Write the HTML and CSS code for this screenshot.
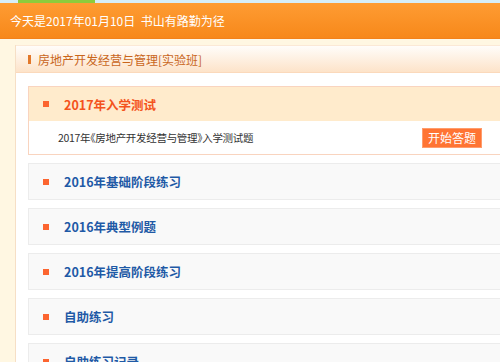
FILE: index.html
```html
<!DOCTYPE html>
<html lang="zh-CN">
<head>
  <meta charset="UTF-8">
  <meta name="viewport" content="width=device-width, initial-scale=1.0">
  <title>在线练习</title>
  <link rel="stylesheet" href="styles.css">
</head>
<body>
  <div class="topbar"></div>
  <header class="header">今天是2017年01月10日&nbsp; 书山有路勤为径</header>

  <div class="main">
    <div class="panel">
      <div class="panel-title"><span class="bar"></span>房地产开发经营与管理[实验班]</div>
      <div class="panel-body">
        <div class="item active">
          <div class="item-head"><span class="dot"></span>2017年入学测试</div>
          <div class="item-row">
            <span class="paper">2017年《房地产开发经营与管理》入学测试题</span>
            <button class="start">开始答题</button>
          </div>
        </div>
        <div class="item">
          <div class="item-head"><span class="dot"></span>2016年基础阶段练习</div>
        </div>
        <div class="item">
          <div class="item-head"><span class="dot"></span>2016年典型例题</div>
        </div>
        <div class="item">
          <div class="item-head"><span class="dot"></span>2016年提高阶段练习</div>
        </div>
        <div class="item">
          <div class="item-head"><span class="dot"></span>自助练习</div>
        </div>
        <div class="item">
          <div class="item-head"><span class="dot"></span>自助练习记录</div>
        </div>
      </div>
    </div>
  </div>
</body>
</html>
```

FILE: styles.css
```css
* {
  box-sizing: border-box;
}
body {
  margin: 0;
  font-family: "Noto Sans CJK SC", "Liberation Sans", sans-serif;
  font-size: 12px;
  color: #333;
  background: #fff7e2;
  overflow: hidden;
}
.topbar {
  height: 3px;
  background: linear-gradient(90deg, #d6eef8 0 18px, #8ccc3c 18px 95px, #d6eef8 95px);
}
.header {
  height: 36px;
  line-height: 36px;
  padding-left: 10px;
  color: #fff;
  font-size: 12px;
  background: linear-gradient(#fe9c33, #f7881a);
  border-bottom: 1px solid #f3811a;
}
.main {
  width: 530px;
  padding: 6px 0 0 15px;
}
.panel {
  background: #fff;
  border-left: 1px solid #f6dfc6;
  min-height: 330px;
}
.panel-title {
  height: 28px;
  display: flex;
  align-items: center;
  padding-left: 12px;
  font-size: 12px;
  color: #c9661c;
  background: linear-gradient(#fffdfa, #fde3c9);
  border-bottom: 1px solid #fbd9bb;
  border-top: 1px solid #fbe9d6;
}
.bar {
  width: 3px;
  height: 9px;
  background: #e2782a;
  margin-right: 7px;
}
.panel-body {
  padding: 13px 13px 0 12px;
}
.item {
  border: 1px solid #ececec;
  background: #f9f9f9;
  margin-bottom: 8px;
}
.item-head {
  height: 35px;
  display: flex;
  align-items: center;
  padding-left: 14px;
  font-size: 12.5px;
  font-weight: bold;
  color: #1f5aa6;
}
.dot {
  width: 6px;
  height: 6px;
  background: #fc6530;
  margin-right: 15px;
}
.item.active {
  border-color: #f9d4bf;
  background: #fff;
}
.item.active .item-head {
  height: 34px;
  background: #ffebcc;
  color: #f4531c;
}
.item-row {
  height: 33px;
  display: flex;
  align-items: center;
  justify-content: space-between;
  padding: 0 34px 0 29px;
  color: #333;
}
.paper {
  font-size: 10.5px;
  letter-spacing: -0.3px;
  font-feature-settings: "halt";
}
.start {
  width: 60px;
  height: 20px;
  padding: 0;
  border: 1px solid #ff9c6c;
  background: #ff7433;
  color: #fff;
  font-family: inherit;
  font-size: 12px;
  cursor: pointer;
}
```
